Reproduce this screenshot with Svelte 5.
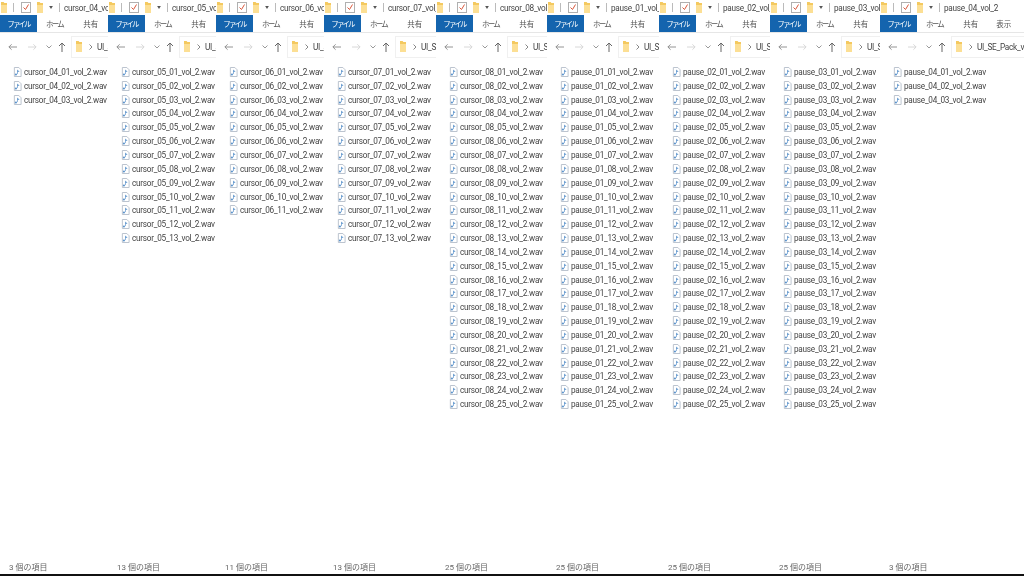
<script>
	const windows = [
		{ width: 108, title: 'cursor_04_vol_2', addr: 'UI_SE_Pack_vol_2', prefix: 'cursor_04', count: 3 },
		{ width: 108, title: 'cursor_05_vol_2', addr: 'UI_SE_Pack_vol_2', prefix: 'cursor_05', count: 13 },
		{ width: 108, title: 'cursor_06_vol_2', addr: 'UI_SE_Pack_vol_2', prefix: 'cursor_06', count: 11 },
		{ width: 112, title: 'cursor_07_vol_2', addr: 'UI_SE_Pack_vol_2', prefix: 'cursor_07', count: 13 },
		{ width: 111, title: 'cursor_08_vol_2', addr: 'UI_SE_Pack_vol_2', prefix: 'cursor_08', count: 25 },
		{ width: 112, title: 'pause_01_vol_2', addr: 'UI_SE_Pack_vol_2', prefix: 'pause_01', count: 25 },
		{ width: 111, title: 'pause_02_vol_2', addr: 'UI_SE_Pack_vol_2', prefix: 'pause_02', count: 25 },
		{ width: 110, title: 'pause_03_vol_2', addr: 'UI_SE_Pack_vol_2', prefix: 'pause_03', count: 25 },
		{ width: 144, title: 'pause_04_vol_2', addr: 'UI_SE_Pack_vol_2', prefix: 'pause_04', count: 3 }
	];

	function files(w) {
		return Array.from({ length: w.count }, (_, i) => `${w.prefix}_${String(i + 1).padStart(2, '0')}_vol_2.wav`);
	}
</script>

{#snippet folder()}
	<svg class="folder" width="6" height="11" viewBox="0 0 7 11" preserveAspectRatio="none">
		<path d="M0 0h3l1 1h3v10H0z" fill="#f4c95f" />
		<path d="M0 3h7v8H0z" fill="#fcdf94" />
	</svg>
{/snippet}

<div class="desktop">
	{#each windows as w}
		<section class="window" style="width: {w.width}px">
			<div class="titlebar">
				{@render folder()}
				<span class="sep first"></span>
				<svg class="check" width="10" height="11" viewBox="0 0 10 11">
					<rect x="0.5" y="0.5" width="9" height="10" fill="#fff" stroke="#b0b0b0" />
					<path d="M2.5 5.5l2 2 3-5" fill="none" stroke="#d9583c" stroke-width="1" />
				</svg>
				{@render folder()}
				<svg class="caret" width="4" height="3" viewBox="0 0 5 4"><path d="M0 0h5L2.5 4z" fill="#555" /></svg>
				<span class="sep"></span>
				<span class="title">{w.title}</span>
			</div>

			<div class="ribbon">
				<span class="file-tab">ファイル</span>
				<span class="tab home">ホーム</span>
				<span class="tab share">共有</span>
				{#if w.width > 130}
					<span class="tab view">表示</span>
				{/if}
			</div>

			<div class="nav">
				<svg class="back" width="9" height="8" viewBox="0 0 10 8"><path d="M10 4H1M4 1L1 4l3 3" fill="none" stroke="#888" /></svg>
				<svg class="forward" width="9" height="8" viewBox="0 0 10 8"><path d="M0 4h9M6 1l3 3-3 3" fill="none" stroke="#d4d4d4" /></svg>
				<svg class="down" width="6" height="4" viewBox="0 0 6 4"><path d="M0.5 0.5L3 3l2.5-2.5" fill="none" stroke="#999" /></svg>
				<svg class="up" width="8" height="10" viewBox="0 0 8 10"><path d="M4 10V1M1 4l3-3 3 3" fill="none" stroke="#666" /></svg>
				<div class="address">
					{@render folder()}
					<svg class="chev" width="4" height="6" viewBox="0 0 4 6"><path d="M0.5 0.5L3 3 0.5 5.5" fill="none" stroke="#888" /></svg>
					<span class="addr-text">{w.addr}</span>
				</div>
			</div>

			<ul class="list">
				{#each files(w) as name}
					<li>
						<svg class="wav" width="9" height="10" viewBox="0 0 10 11">
							<path d="M1.5 0.5h5l2.5 2.5v7.5h-7.5z" fill="#fff" stroke="#b4bdc9" />
							<path d="M3 8.5c1.5 0 2-1 2-2.5V3.5c1 .5 1.5 1 1.5 2" fill="none" stroke="#5d94cc" />
							<circle cx="3.2" cy="8.2" r="1.1" fill="#5d94cc" />
						</svg>
						<span>{name}</span>
					</li>
				{/each}
			</ul>

			<div class="status">{w.count} 個の項目</div>
		</section>
	{/each}
</div>

<style>
	:global(body) {
		background: #fff;
	}

	.desktop {
		display: flex;
		width: 1024px;
		height: 574px;
		border-bottom: 2px solid #111;
		overflow: hidden;
		font-family: Roboto, "Noto Sans CJK JP", sans-serif;
		color: #444;
		filter: blur(0.35px);
	}

	.window {
		flex: none;
		display: flex;
		flex-direction: column;
		overflow: hidden;
		background: #fff;
	}

	.titlebar {
		display: flex;
		align-items: center;
		height: 15px;
		padding-left: 1px;
		white-space: nowrap;
		font-size: 8.2px;
		letter-spacing: -0.25px;
	}

	.sep {
		flex: none;
		width: 1px;
		height: 9px;
		margin: 0 4px 0 6px;
		background: #bbb;
	}

	.sep.first {
		margin: 0 7px 0 6px;
	}

	.check {
		flex: none;
		margin-right: 6px;
	}

	.caret {
		flex: none;
		margin-left: 6px;
	}

	.title {
		color: #444;
	}

	.ribbon {
		display: flex;
		align-items: center;
		height: 17px;
		border-bottom: 1px solid #e6e6e6;
		white-space: nowrap;
		font-size: 7.5px;
	}

	.file-tab {
		flex: none;
		align-self: stretch;
		display: flex;
		align-items: center;
		justify-content: center;
		width: 37px;
		background: #1464ae;
		color: #fff;
		letter-spacing: -1.9px;
	}

	.tab {
		flex: none;
		color: #555;
	}

	.home {
		margin-left: 9px;
		letter-spacing: -1.7px;
	}

	.share {
		margin-left: 20px;
	}

	.view {
		margin-left: 18px;
	}

	.nav {
		display: flex;
		align-items: center;
		height: 27px;
		padding-left: 8px;
		white-space: nowrap;
	}

	.nav svg {
		flex: none;
	}

	.forward {
		margin-left: 11px;
	}

	.down {
		margin-left: 9px;
	}

	.up {
		margin-left: 6px;
	}

	.address {
		flex: 1;
		display: flex;
		align-items: center;
		height: 20px;
		margin-left: 5px;
		padding-left: 4px;
		border: 1px solid #f0f0f0;
		border-right: none;
		font-size: 8.2px;
		letter-spacing: -0.25px;
		color: #444;
		min-width: 0;
	}

	.chev {
		flex: none;
		margin: 0 4px 0 7px;
	}

	.folder {
		flex: none;
	}

	.list {
		flex: 1;
		list-style: none;
		margin: 0;
		padding: 5px 0 0 13px;
		font-size: 8.2px;
		letter-spacing: -0.25px;
	}

	.list li {
		display: flex;
		align-items: center;
		gap: 2px;
		height: 13.85px;
		white-space: nowrap;
	}

	.wav {
		flex: none;
	}

	.status {
		height: 13px;
		padding-left: 9px;
		font-size: 8px;
		color: #666;
		white-space: nowrap;
	}
</style>
